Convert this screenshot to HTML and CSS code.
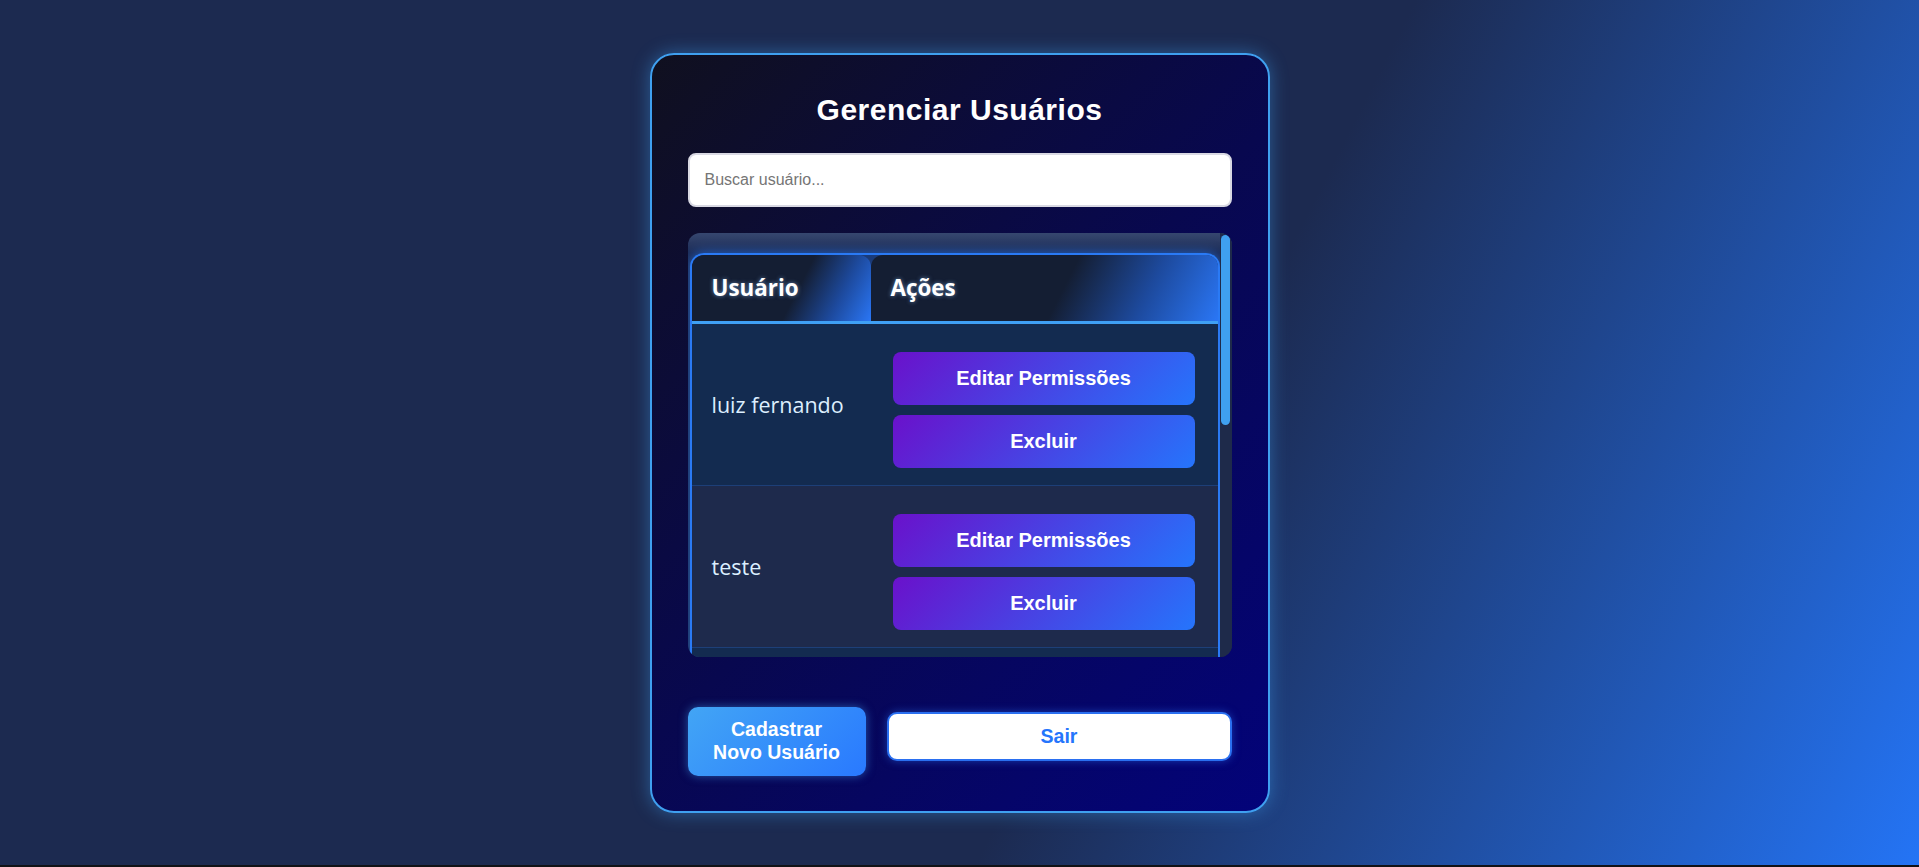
FILE: index.html
```html
<!DOCTYPE html>
<html lang="pt-BR">
<head>
<meta charset="utf-8">
<title>Gerenciar Usuários</title>
<link rel="stylesheet" href="styles.css">
</head>
<body>
<main class="card">
  <h2 class="title">Gerenciar Usuários</h2>
  <input class="search" type="text" placeholder="Buscar usuário...">
  <div class="table-wrap">
    <div class="table-scroll">
      <table class="users">
        <colgroup><col class="c-user"><col class="c-actions"></colgroup>
        <thead>
          <tr><th class="th-user">Usuário</th><th class="th-actions">Ações</th></tr>
        </thead>
        <tbody>
          <tr><td class="name">luiz fernando</td><td class="actions"><button class="btn-grad">Editar Permissões</button><button class="btn-grad">Excluir</button></td></tr>
          <tr><td class="name">teste</td><td class="actions"><button class="btn-grad">Editar Permissões</button><button class="btn-grad">Excluir</button></td></tr>
          <tr class="stub"><td></td><td></td></tr>
        </tbody>
      </table>
    </div>
    <div class="scrollbar"><div class="thumb"></div></div>
  </div>
  <div class="footer">
    <button class="btn-new"><span class="line">Cadastrar</span><span class="line">Novo Usuário</span></button>
    <button class="btn-exit">Sair</button>
  </div>
</main>
</body>
</html>
```

FILE: styles.css
```css
html {
  background: #111216;
}
body {
  margin: 0;
  height: 865px;
  display: flex;
  justify-content: center;
  align-items: center;
  background: linear-gradient(117deg, #1c2a50 60%, #2474f5 100%);
  font-family: "Liberation Sans", Arial, sans-serif;
}
.card {
  width: 620px;
  box-sizing: border-box;
  padding: 38px 36px 35px;
  border: 2px solid #3fa0f0;
  border-radius: 24px;
  background: linear-gradient(135deg, #10101f 0%, #08084f 50%, #03037a 100%);
  box-shadow: 0 0 18px rgba(63, 160, 240, 0.45);
}
.title {
  margin: 0 0 27px;
  text-align: center;
  color: #fff;
  font-size: 30px;
  line-height: 33px;
  letter-spacing: 0.5px;
  font-weight: bold;
}
.search {
  display: block;
  width: 100%;
  box-sizing: border-box;
  height: 54px;
  padding: 0 15px;
  border: 2px solid #d9d9e3;
  border-radius: 8px;
  font: 16px "Liberation Sans", Arial, sans-serif;
  color: #333;
  background: #fff;
  margin: 0 0 26px;
  outline: none;
}
.search::placeholder {
  color: #757575;
}
.table-wrap {
  display: flex;
  height: 424px;
  border-radius: 12px;
  overflow: hidden;
  background: linear-gradient(180deg, #36476f 0, #1c2b55 20px, #1e2a4a 40px);
}
.table-scroll {
  flex: 1;
  min-width: 0;
  overflow: hidden;
  padding: 20px 0 0 2px;
}
.scrollbar {
  width: 12px;
  flex: none;
  box-sizing: border-box;
  padding: 2px 1.5px;
  background: #1e2a4a;
}
.thumb {
  height: 190px;
  border-radius: 5px;
  background: #3fa0f0;
}
.users {
  width: 100%;
  table-layout: fixed;
  border-collapse: separate;
  border-spacing: 0;
  border: 2px solid #2a7af5;
  border-bottom: none;
  border-radius: 14px 14px 0 0;
  background: #1a3a78;
  box-shadow: 0 0 12px rgba(42, 122, 245, 0.7);
  font-family: "Open Sans", "Noto Sans", sans-serif;
}
.c-user {
  width: 179px;
}
.users th {
  height: 66px;
  padding: 0 20px;
  text-align: left;
  font-size: 22.4px;
  font-weight: 700;
  color: #fff;
  text-shadow: 0 0 4px rgba(150, 200, 255, 0.6);
  border-bottom: 3px solid #3fa0f5;
  border-radius: 12px 12px 0 0;
}
.th-user {
  background: linear-gradient(117deg, #141e33 58%, #1d4a9e 80%, #2a76f5 100%);
}
.th-actions {
  background: linear-gradient(117deg, #141e33 55%, #1d4a9e 78%, #2a76f5 100%);
}
.users td {
  border-bottom: 1px solid #1d3f78;
  background: #132b50;
}
.users tbody tr:nth-child(even) td {
  background: #1e2a4c;
}
.users tr.stub td {
  height: 60px;
  border-bottom: none;
}
.users td.name {
  padding: 0 20px;
  vertical-align: middle;
  font-size: 21.5px;
  color: #dcefff;
}
.users td.actions {
  padding: 28px 23px 17px 22px;
}
.btn-grad {
  display: block;
  width: 100%;
  height: 53px;
  border: none;
  border-radius: 8px;
  background: linear-gradient(135deg, #6a11cb, #2575fc);
  color: #fff;
  font: bold 20px "Liberation Sans", Arial, sans-serif;
}
.btn-grad + .btn-grad {
  margin-top: 10px;
}
.footer {
  display: flex;
  gap: 21px;
  margin-top: 50px;
  align-items: flex-start;
}
.btn-new {
  width: 178px;
  height: 69px;
  padding: 0 8px;
  border: none;
  border-radius: 10px;
  background: linear-gradient(135deg, #42a5f5, #2979ff);
  color: #fff;
  font: bold 19.5px/23px "Liberation Sans", Arial, sans-serif;
  box-shadow: 0 0 10px rgba(66, 165, 245, 0.5);
}
.line {
  display: block;
}
.btn-exit {
  flex: 1;
  height: 49px;
  margin-top: 5px;
  background: #fff;
  border: 2px solid #2a6ff0;
  border-radius: 10px;
  color: #2575fc;
  font: bold 19.5px "Liberation Sans", Arial, sans-serif;
  box-shadow: 0 0 8px rgba(42, 111, 240, 0.5);
}
```
